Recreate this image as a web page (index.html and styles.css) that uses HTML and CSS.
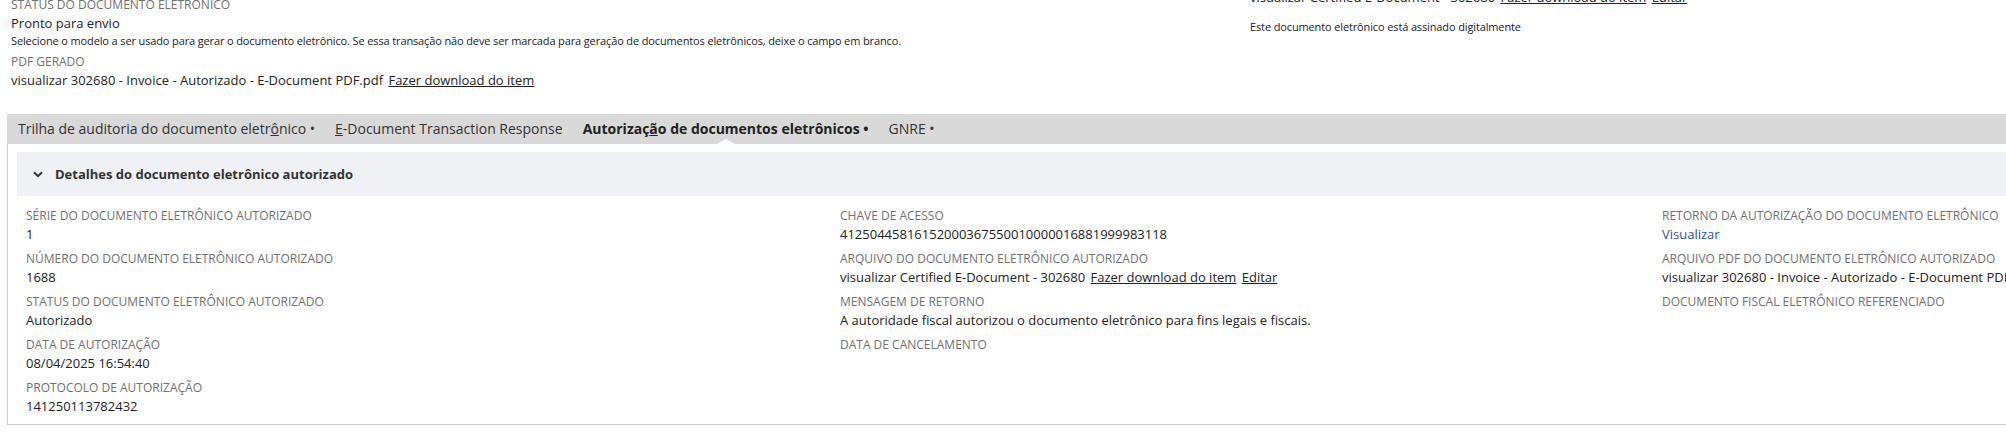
FILE: index.html
```html
<!DOCTYPE html>
<html lang="pt-BR">
<head>
    <meta charset="UTF-8">
    <meta name="viewport" content="width=device-width, initial-scale=1.0">
    <title>Documento eletrônico</title>
    <link rel="stylesheet" href="styles.css">
</head>
<body>
<div class="page">
    <!-- Top of the record form -->
    <div class="top-form">
        <div class="top-col">
            <div class="field-label">STATUS DO DOCUMENTO ELETRÔNICO</div>
            <div class="field-value">Pronto para envio</div>
            <div class="hint">Selecione o modelo a ser usado para gerar o documento eletrônico. Se essa transação não deve ser marcada para geração de documentos eletrônicos, deixe o campo em branco.</div>
            <div class="field-label">PDF GERADO</div>
            <div class="field-value">visualizar 302680 - Invoice - Autorizado - E-Document PDF.pdf <a href="#" class="item-link">Fazer download do item</a></div>
        </div>
        <div class="top-col">
            <div class="field-value cut">visualizar Certified E-Document - 302680 <a href="#" class="item-link">Fazer download do item</a> <a href="#" class="item-link">Editar</a></div>
            <div class="hint signed">Este documento eletrônico está assinado digitalmente</div>
        </div>
    </div>

    <!-- Subtabs -->
    <div class="tabs">
        <div class="tab">Trilha de auditoria do documento eletr<u>ô</u>nico •</div>
        <div class="tab"><u>E</u>-Document Transaction Response</div>
        <div class="tab active">Autorizaç<u>ã</u>o de documentos eletrônicos •</div>
        <div class="tab">GNRE •</div>
    </div>

    <div class="panel">
        <div class="panel-head">
            <svg class="chevron" width="10" height="7" viewBox="0 0 10 7"><path d="M1 1.2l4 4 4-4" fill="none" stroke="#333" stroke-width="2"/></svg>
            <span>Detalhes do documento eletrônico autorizado</span>
        </div>
        <div class="fields">
            <div class="col">
                <div class="field">
                    <div class="field-label">SÉRIE DO DOCUMENTO ELETRÔNICO AUTORIZADO</div>
                    <div class="field-value">1</div>
                </div>
                <div class="field">
                    <div class="field-label">NÚMERO DO DOCUMENTO ELETRÔNICO AUTORIZADO</div>
                    <div class="field-value">1688</div>
                </div>
                <div class="field">
                    <div class="field-label">STATUS DO DOCUMENTO ELETRÔNICO AUTORIZADO</div>
                    <div class="field-value">Autorizado</div>
                </div>
                <div class="field">
                    <div class="field-label">DATA DE AUTORIZAÇÃO</div>
                    <div class="field-value">08/04/2025 16:54:40</div>
                </div>
                <div class="field">
                    <div class="field-label">PROTOCOLO DE AUTORIZAÇÃO</div>
                    <div class="field-value">141250113782432</div>
                </div>
            </div>
            <div class="col">
                <div class="field">
                    <div class="field-label">CHAVE DE ACESSO</div>
                    <div class="field-value">41250445816152000367550010000016881999983118</div>
                </div>
                <div class="field">
                    <div class="field-label">ARQUIVO DO DOCUMENTO ELETRÔNICO AUTORIZADO</div>
                    <div class="field-value">visualizar Certified E-Document - 302680 <a href="#" class="item-link">Fazer download do item</a> <a href="#" class="item-link">Editar</a></div>
                </div>
                <div class="field">
                    <div class="field-label">MENSAGEM DE RETORNO</div>
                    <div class="field-value">A autoridade fiscal autorizou o documento eletrônico para fins legais e fiscais.</div>
                </div>
                <div class="field">
                    <div class="field-label">DATA DE CANCELAMENTO</div>
                    <div class="field-value"></div>
                </div>
            </div>
            <div class="col">
                <div class="field">
                    <div class="field-label">RETORNO DA AUTORIZAÇÃO DO DOCUMENTO ELETRÔNICO</div>
                    <div class="field-value"><a href="#" class="view-link">Visualizar</a></div>
                </div>
                <div class="field">
                    <div class="field-label">ARQUIVO PDF DO DOCUMENTO ELETRÔNICO AUTORIZADO</div>
                    <div class="field-value">visualizar 302680 - Invoice - Autorizado - E-Document PDF.pdf <a href="#" class="item-link">Fazer download do item</a></div>
                </div>
                <div class="field">
                    <div class="field-label">DOCUMENTO FISCAL ELETRÔNICO REFERENCIADO</div>
                    <div class="field-value"></div>
                </div>
            </div>
        </div>
    </div>
</div>
</body>
</html>
```

FILE: styles.css
```css
body {
    margin: 0;
    font-family: "Open Sans", Arial, sans-serif;
    color: #222;
    background-color: #fff;
    overflow: hidden;
}
.page {
    width: 2500px;
}
a {
    color: inherit;
}
.item-link {
    margin-left: 2px;
    text-decoration: underline;
}
.view-link {
    color: #2a5a9c;
    text-decoration: none;
}
.field-label {
    font-size: 12px;
    line-height: 16px;
    color: #707070;
}
.field-value {
    font-size: 13px;
    line-height: 20px;
    white-space: nowrap;
}
.hint {
    font-size: 11px;
    line-height: 16px;
    letter-spacing: -0.13px;
    white-space: nowrap;
}

/* top form */
.top-form {
    display: grid;
    grid-template-columns: 1239px auto;
    padding-left: 11px;
    margin-top: -3px;
}
.hint + .field-label {
    margin-top: 5px;
}
.field-value.cut {
    margin-top: -10px;
}
.hint.signed {
    margin-top: 12px;
}

/* tabs */
.tabs {
    display: flex;
    margin: 24px 0 0 7px;
    padding-left: 1px;
    height: 30px;
    background-color: #d9d9d9;
}
.tab {
    position: relative;
    padding: 0 10px;
    font-size: 14px;
    line-height: 30px;
    color: #333;
    white-space: nowrap;
}
.tab.active {
    font-weight: bold;
    color: #222;
}
.tab.active::after {
    content: "";
    position: absolute;
    left: 50%;
    bottom: 0;
    margin-left: -9px;
    border-left: 9px solid transparent;
    border-right: 9px solid transparent;
    border-bottom: 5px solid #fff;
}

/* panel */
.panel {
    margin-left: 7px;
    border: 1px solid #cccccc;
    border-top: none;
    padding: 8px 9px 8px 9px;
}
.panel-head {
    display: flex;
    align-items: center;
    gap: 12px;
    height: 44px;
    padding-left: 16px;
    background-color: #f0f1f4;
    font-size: 13px;
    font-weight: bold;
    color: #333;
}
.fields {
    display: grid;
    grid-template-columns: 814px 822px auto;
    padding: 12px 9px 0;
}
.field + .field {
    margin-top: 7px;
}
```
